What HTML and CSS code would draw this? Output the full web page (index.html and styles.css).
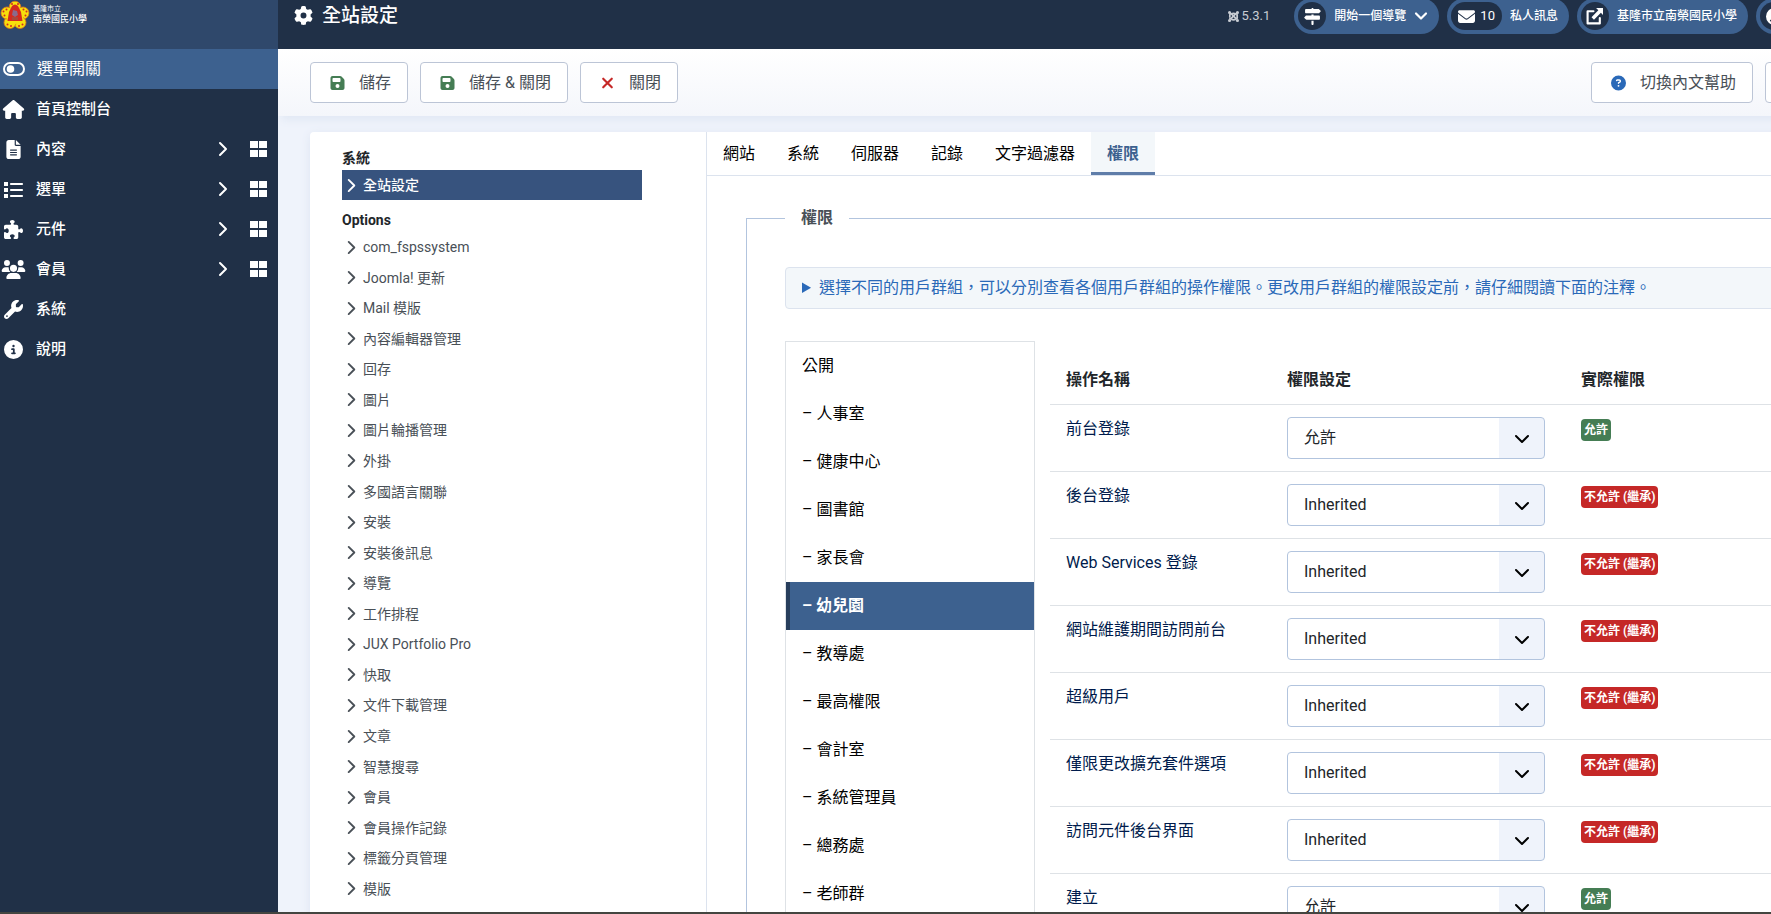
FILE: index.html
```html
<!DOCTYPE html>
<html lang="zh-TW">
<head>
<meta charset="utf-8">
<title>全站設定</title>
<link rel="stylesheet" href="styles.css">
</head>
<body>
<svg class="sprite" aria-hidden="true">
  <symbol id="chev-right" viewBox="0 0 10 16"><path d="M2 2l6 6-6 6" fill="none" stroke="currentColor" stroke-width="2" stroke-linecap="round" stroke-linejoin="round"/></symbol>
  <symbol id="grid" viewBox="0 0 18 18"><path d="M0 1h8v7H0zM9 1h8v7H9zM0 10h8v7H0zM9 10h8v7H9z"/></symbol>
  <symbol id="save" viewBox="0 0 448 512"><path d="M64 32C28.7 32 0 60.7 0 96V416c0 35.3 28.7 64 64 64H384c35.3 0 64-28.7 64-64V173.3c0-17-6.7-33.3-18.7-45.3L352 50.7C340 38.7 323.7 32 306.7 32H64zm0 96c0-17.7 14.3-32 32-32H288c17.7 0 32 14.3 32 32v64c0 17.7-14.3 32-32 32H96c-17.7 0-32-14.3-32-32V128zM224 288a64 64 0 1 1 0 128 64 64 0 1 1 0-128z"/></symbol>
</svg>

<div class="shell">
  <aside class="sidebar">
    <a class="logo" href="#">
      <svg class="emblem" viewBox="0 0 30 30" aria-hidden="true">
        <g fill="#f7e00c" stroke="#e0741a" stroke-width=".8">
          <circle cx="15" cy="7" r="5.800"/><circle cx="23" cy="13" r="6"/><circle cx="20" cy="22.500" r="6"/><circle cx="10" cy="22.500" r="6"/><circle cx="7" cy="13" r="6"/>
        </g>
        <circle cx="15" cy="15.500" r="8.500" fill="#f7e00c"/>
        <path d="M12 6q3-3 6 0l3 6 1.500 9H7.500L9 12z" fill="#d42a20"/>
        <path d="M13 10l4 1 1 4-3 2-3-2z" fill="#8a6a8c"/>
        <path d="M12 17h6v3h-6z" fill="#a8483c"/>
        <g fill="#d42a20"><circle cx="3.500" cy="11.500" r="1"/><circle cx="6.500" cy="9.500" r="1"/><circle cx="4.500" cy="15.500" r="1"/><circle cx="26.500" cy="11.500" r="1"/><circle cx="23.500" cy="9.500" r="1"/><circle cx="25.500" cy="15.500" r="1"/><circle cx="7.500" cy="24.500" r="1"/><circle cx="11" cy="26" r="1"/><circle cx="19" cy="26" r="1"/><circle cx="22.500" cy="24.500" r="1"/><circle cx="12" cy="4" r="1"/><circle cx="18" cy="4" r="1"/></g>
      </svg>
      <span class="logo-text"><span class="logo-small">基隆市立</span><span class="logo-name">南榮國民小學</span></span>
    </a>
    <button class="menu-toggle" type="button">
      <svg class="icon-toggle" viewBox="0 0 22 14" aria-hidden="true"><rect x="1" y="1" width="20" height="12" rx="6" fill="none" stroke="currentColor" stroke-width="2"/><circle cx="7.500" cy="7" r="3.800"/></svg>
      <span>選單開關</span>
    </button>
    <nav>
      <ul class="menu">
        <li><a href="#"><svg class="mi wide" viewBox="0 0 576 512"><path d="M575.8 255.5c0 18-15 32.1-32 32.1h-32l.7 160.2c0 2.700-.2 5.400-.5 8.100V472c0 22.100-17.900 40-40 40H392c-22.100 0-40-17.900-40-40V384c0-17.700-14.300-32-32-32H256c-17.700 0-32 14.300-32 32v88c0 22.100-17.900 40-40 40H104c-22.100 0-40-17.900-40-40V287.600H32c-18 0-32-14-32-32.100c0-9 3-17 10-24L266.400 8c7-7 15-8 22-8s15 2 21 7L564.800 231.500c8 7 12 15 11 24z"/></svg><span>首頁控制台</span></a></li>
        <li><a href="#"><svg class="mi" viewBox="0 0 384 512"><path d="M64 0C28.7 0 0 28.7 0 64V448c0 35.3 28.7 64 64 64H320c35.3 0 64-28.7 64-64V160H256c-17.7 0-32-14.3-32-32V0H64zM256 0V128H384L256 0zM112 256H272c8.8 0 16 7.2 16 16s-7.2 16-16 16H112c-8.8 0-16-7.2-16-16s7.2-16 16-16zm0 64H272c8.8 0 16 7.2 16 16s-7.2 16-16 16H112c-8.8 0-16-7.2-16-16s7.2-16 16-16zm0 64H272c8.8 0 16 7.2 16 16s-7.2 16-16 16H112c-8.8 0-16-7.2-16-16s7.2-16 16-16z"/></svg><span>內容</span><svg class="sub"><use href="#chev-right"/></svg></a><a class="dash" href="#" aria-label="內容"><svg><use href="#grid"/></svg></a></li>
        <li><a href="#"><svg class="mi" viewBox="0 0 19 19"><path d="M0 2h4v4H0zM0 8h4v4H0zM0 14h4v4H0z"/><path d="M7 4h11M7 10h11M7 16h11" stroke="currentColor" stroke-width="2.200" stroke-linecap="round"/></svg><span>選單</span><svg class="sub"><use href="#chev-right"/></svg></a><a class="dash" href="#" aria-label="選單"><svg><use href="#grid"/></svg></a></li>
        <li><a href="#"><svg class="mi" viewBox="0 0 512 512"><path d="M192 104.8c0-9.2-5.8-17.3-13.2-22.8C167.2 73.3 160 61.3 160 48c0-26.5 28.7-48 64-48s64 21.5 64 48c0 13.3-7.2 25.3-18.8 34c-7.4 5.5-13.2 13.6-13.2 22.8c0 12.8 10.4 23.2 23.2 23.2H336c26.5 0 48 21.5 48 48v56.8c0 12.8 10.4 23.2 23.2 23.2c9.2 0 17.3-5.8 22.8-13.2c8.7-11.6 20.7-18.8 34-18.8c26.5 0 48 28.7 48 64s-21.5 64-48 64c-13.3 0-25.3-7.2-34-18.8c-5.5-7.4-13.6-13.2-22.8-13.2c-12.8 0-23.2 10.4-23.2 23.2V464c0 26.5-21.5 48-48 48H279.2c-12.8 0-23.2-10.4-23.2-23.2c0-9.2 5.8-17.3 13.2-22.8c11.6-8.700 18.8-20.700 18.8-34c0-26.5-28.7-48-64-48s-64 21.5-64 48c0 13.3 7.2 25.3 18.8 34c7.4 5.5 13.2 13.6 13.2 22.8c0 12.8-10.4 23.2-23.2 23.2H48c-26.5 0-48-21.5-48-48V343.2C0 330.4 10.4 320 23.2 320c9.2 0 17.3 5.8 22.8 13.2C54.7 344.8 66.7 352 80 352c26.5 0 48-28.7 48-64s-21.5-64-48-64c-13.3 0-25.3 7.2-34 18.8C40.500 250.2 32.4 256 23.2 256C10.4 256 0 245.6 0 232.8V176c0-26.5 21.5-48 48-48H168.8c12.8 0 23.2-10.4 23.2-23.2z"/></svg><span>元件</span><svg class="sub"><use href="#chev-right"/></svg></a><a class="dash" href="#" aria-label="元件"><svg><use href="#grid"/></svg></a></li>
        <li><a href="#"><svg class="mi wide" viewBox="0 0 640 512"><path d="M144 0a80 80 0 1 1 0 160A80 80 0 1 1 144 0zM512 0a80 80 0 1 1 0 160A80 80 0 1 1 512 0zM0 298.7C0 239.8 47.8 192 106.7 192h42.7c15.9 0 31 3.5 44.6 9.7c-1.3 7.2-1.9 14.7-1.9 22.3c0 38.2 16.8 72.5 43.3 96H21.3C9.6 320 0 310.4 0 298.7zM404.6 320c26.6-23.5 43.3-57.8 43.3-96c0-7.6-.7-15-1.9-22.3c13.6-6.3 28.7-9.7 44.6-9.7h42.7C592.2 192 640 239.8 640 298.7c0 11.8-9.6 21.3-21.3 21.3zM224 224a96 96 0 1 1 192 0 96 96 0 1 1-192 0zM128 485.3C128 411.7 187.7 352 261.3 352H378.7C452.3 352 512 411.7 512 485.3c0 14.7-11.9 26.7-26.7 26.7H154.7c-14.7 0-26.7-11.9-26.7-26.7z"/></svg><span>會員</span><svg class="sub"><use href="#chev-right"/></svg></a><a class="dash" href="#" aria-label="會員"><svg><use href="#grid"/></svg></a></li>
        <li><a href="#"><svg class="mi" viewBox="0 0 512 512"><path d="M352 320c88.4 0 160-71.6 160-160c0-15.3-2.2-30.1-6.2-44.2c-3.1-10.8-16.4-13.2-24.3-5.3l-76.8 76.8c-3 3-7.1 4.7-11.3 4.7H336c-8.8 0-16-7.2-16-16V118.6c0-4.2 1.7-8.3 4.7-11.3l76.8-76.8c7.9-7.9 5.4-21.2-5.3-24.3C382.1 2.2 367.3 0 352 0C263.6 0 192 71.6 192 160c0 19.1 3.4 37.5 9.5 54.5L19.9 396.1C7.2 408.8 0 426.1 0 444.1C0 481.6 30.4 512 67.9 512c18 0 35.3-7.2 48-19.9L297.5 310.5c17 6.2 35.4 9.5 54.5 9.5zM80 408a24 24 0 1 1 0 48 24 24 0 1 1 0-48z"/></svg><span>系統</span></a></li>
        <li><a href="#"><svg class="mi" viewBox="0 0 512 512"><path d="M256 512A256 256 0 1 0 256 0a256 256 0 1 0 0 512zM216 336h24V272H216c-13.3 0-24-10.7-24-24s10.7-24 24-24h48c13.3 0 24 10.7 24 24v88h8c13.3 0 24 10.7 24 24s-10.7 24-24 24H216c-13.3 0-24-10.7-24-24s10.7-24 24-24zm40-208a32 32 0 1 1 0 64 32 32 0 1 1 0-64z"/></svg><span>說明</span></a></li>
      </ul>
    </nav>
  </aside>

  <div class="page">
    <header class="header">
      <h1 class="title"><svg viewBox="0 0 512 512" aria-hidden="true"><path d="M495.9 166.6c3.2 8.7 .5 18.4-6.4 24.6l-43.3 39.4c1.1 8.3 1.7 16.8 1.7 25.4s-.6 17.1-1.7 25.4l43.3 39.4c6.9 6.2 9.6 15.9 6.4 24.6c-4.4 11.9-9.7 23.3-15.8 34.3l-4.7 8.1c-6.6 11-14 21.4-22.1 31.2c-5.9 7.2-15.7 9.6-24.5 6.8l-55.7-17.7c-13.4 10.3-28.2 18.9-44 25.4l-12.5 57.1c-2 9.1-9 16.3-18.2 17.8c-13.8 2.3-28 3.5-42.5 3.5s-28.7-1.2-42.5-3.5c-9.2-1.5-16.2-8.7-18.2-17.8l-12.5-57.1c-15.8-6.5-30.6-15.1-44-25.4L83.1 425.9c-8.8 2.8-18.6 .3-24.5-6.8c-8.1-9.8-15.5-20.2-22.1-31.2l-4.7-8.1c-6.1-11-11.4-22.4-15.8-34.3c-3.2-8.7-.5-18.4 6.4-24.6l43.3-39.4C64.6 273.1 64 264.6 64 256s.6-17.1 1.7-25.4L22.4 191.2c-6.9-6.2-9.6-15.9-6.4-24.6c4.4-11.9 9.7-23.3 15.8-34.3l4.7-8.1c6.6-11 14-21.4 22.1-31.2c5.9-7.2 15.7-9.6 24.5-6.8l55.7 17.7c13.4-10.3 28.2-18.9 44-25.4l12.5-57.1c2-9.1 9-16.3 18.2-17.8C227.3 1.2 241.5 0 256 0s28.7 1.2 42.5 3.5c9.2 1.5 16.2 8.7 18.2 17.8l12.5 57.1c15.8 6.5 30.6 15.1 44 25.4l55.7-17.7c8.8-2.8 18.6-.3 24.5 6.8c8.1 9.8 15.5 20.2 22.1 31.2l4.7 8.1c6.1 11 11.4 22.4 15.8 34.3zM256 336a80 80 0 1 0 0-160 80 80 0 1 0 0 160z"/></svg>全站設定</h1>
      <div class="header-items">
        <span class="version"><svg viewBox="0 0 12 12" aria-hidden="true"><g fill="none" stroke="currentColor" stroke-width="1.900"><path d="M2 7V4.500Q2 2 4 3.500L8.500 8Q10 9.500 10 7"/><path d="M10 5Q10 2 8 3.500L3.500 8Q2 9.500 2 7"/><path d="M10 4v4M3.500 3.500Q6 1.500 8.500 3.500M3.500 8.800Q6 10.500 8.500 8.800"/></g><circle cx="1.700" cy="1.700" r="1.700"/><circle cx="10.300" cy="1.700" r="1.700"/><circle cx="1.700" cy="10.300" r="1.700"/><circle cx="10.300" cy="10.300" r="1.700"/></svg>5.3.1</span>
        <button class="pill" type="button"><span class="pill-icon"><svg viewBox="0 0 512 512" aria-hidden="true"><path d="M224 32H64C46.3 32 32 46.3 32 64v64c0 17.7 14.3 32 32 32H441.4c4.2 0 8.3-1.7 11.3-4.7l48-48c6.2-6.2 6.2-16.4 0-22.6l-48-48c-3-3-7.1-4.7-11.3-4.7H288c0-17.7-14.3-32-32-32s-32 14.3-32 32zM480 256c0-17.7-14.3-32-32-32H288V192H224v32H70.6c-4.2 0-8.3 1.7-11.3 4.7l-48 48c-6.2 6.2-6.2 16.4 0 22.6l48 48c3 3 7.1 4.7 11.3 4.7H448c17.7 0 32-14.3 32-32V256zM288 480V384H224v96c0 17.7 14.3 32 32 32s32-14.3 32-32z"/></svg></span><span>開始一個導覽</span><svg class="caret" viewBox="0 0 14 14" aria-hidden="true"><path d="M2 4.500l5 5 5-5" fill="none" stroke="currentColor" stroke-width="2.200" stroke-linecap="round" stroke-linejoin="round"/></svg></button>
        <a class="pill" href="#"><span class="pill-icon pill-count"><svg viewBox="0 0 512 512" aria-hidden="true"><path d="M48 64C21.500 64 0 85.500 0 112c0 15.100 7.100 29.300 19.200 38.400L236.800 313.600c11.400 8.500 27 8.500 38.400 0L492.800 150.400c12.100-9.100 19.200-23.300 19.200-38.400c0-26.500-21.500-48-48-48H48zM0 176V384c0 35.300 28.700 64 64 64H448c35.300 0 64-28.700 64-64V176L294.400 339.200c-22.800 17.100-54 17.100-76.800 0L0 176z"/></svg>10</span><span>私人訊息</span></a>
        <a class="pill" href="#"><span class="pill-icon"><svg viewBox="0 0 16 16" aria-hidden="true"><path d="M7 3H1.500v11.500H13V9.500" fill="none" stroke="currentColor" stroke-width="2" stroke-linejoin="round" stroke-linecap="round"/><path d="M9.500 0H16v6.500l-2-2L7.500 11 5.200 8.700 11.600 2z"/></svg></span><span>基隆市立南榮國民小學</span></a>
        <button class="pill pill-user" type="button" aria-label="會員選單"><span class="pill-icon"><svg viewBox="0 0 512 512" aria-hidden="true"><path d="M399 384.2C376.900 345.800 335.400 320 288 320H224c-47.400 0-88.900 25.800-111 64.200c35.200 39.200 86.200 63.800 143 63.800s107.800-24.700 143-63.800zM0 256a256 256 0 1 1 512 0A256 256 0 1 1 0 256zm256 16a72 72 0 1 0 0-144 72 72 0 1 0 0 144z"/></svg></span></button>
      </div>
    </header>

    <div class="toolbar">
      <button class="btn" type="button"><svg class="ok"><use href="#save"/></svg>儲存</button>
      <button class="btn" type="button"><svg class="ok"><use href="#save"/></svg>儲存 &amp; 關閉</button>
      <button class="btn" type="button"><svg class="bad" viewBox="0 0 14 14"><path d="M3 3l8 8M11 3l-8 8" stroke="currentColor" stroke-width="2" stroke-linecap="round"/></svg>關閉</button>
      <button class="btn btn-help" type="button"><svg class="info" viewBox="0 0 512 512"><path d="M256 512A256 256 0 1 0 256 0a256 256 0 1 0 0 512zM169.800 165.300c7.900-22.300 29.100-37.300 52.800-37.300h58.300c34.900 0 63.100 28.300 63.100 63.100c0 22.600-12.100 43.500-31.700 54.800L280 264.400c-.2 13-10.900 23.600-24 23.600c-13.300 0-24-10.700-24-24V250.500c0-8.600 4.600-16.500 12.100-20.800l44.300-25.400c4.700-2.700 7.600-7.700 7.600-13.100c0-8.400-6.800-15.100-15.100-15.100H222.600c-3.400 0-6.400 2.100-7.500 5.300l-.4 1.200c-4.400 12.500-18.200 19-30.600 14.600s-19-18.200-14.600-30.600l.3-1.200zM224 352a32 32 0 1 1 64 0 32 32 0 1 1-64 0z"/></svg>切換內文幫助</button>
      <button class="btn btn-more" type="button" aria-label="選項"></button>
    </div>

    <main class="card">
      <nav class="config-nav">
        <h2>系統</h2>
        <a class="config-link current" href="#"><svg><use href="#chev-right"/></svg>全站設定</a>
        <h2 class="options-title">Options</h2>
        <ul class="config-list">
          <li><a class="config-link" href="#"><svg><use href="#chev-right"/></svg>com_fspssystem</a></li>
          <li><a class="config-link" href="#"><svg><use href="#chev-right"/></svg>Joomla! 更新</a></li>
          <li><a class="config-link" href="#"><svg><use href="#chev-right"/></svg>Mail 模版</a></li>
          <li><a class="config-link" href="#"><svg><use href="#chev-right"/></svg>內容編輯器管理</a></li>
          <li><a class="config-link" href="#"><svg><use href="#chev-right"/></svg>回存</a></li>
          <li><a class="config-link" href="#"><svg><use href="#chev-right"/></svg>圖片</a></li>
          <li><a class="config-link" href="#"><svg><use href="#chev-right"/></svg>圖片輪播管理</a></li>
          <li><a class="config-link" href="#"><svg><use href="#chev-right"/></svg>外掛</a></li>
          <li><a class="config-link" href="#"><svg><use href="#chev-right"/></svg>多國語言關聯</a></li>
          <li><a class="config-link" href="#"><svg><use href="#chev-right"/></svg>安裝</a></li>
          <li><a class="config-link" href="#"><svg><use href="#chev-right"/></svg>安裝後訊息</a></li>
          <li><a class="config-link" href="#"><svg><use href="#chev-right"/></svg>導覽</a></li>
          <li><a class="config-link" href="#"><svg><use href="#chev-right"/></svg>工作排程</a></li>
          <li><a class="config-link" href="#"><svg><use href="#chev-right"/></svg>JUX Portfolio Pro</a></li>
          <li><a class="config-link" href="#"><svg><use href="#chev-right"/></svg>快取</a></li>
          <li><a class="config-link" href="#"><svg><use href="#chev-right"/></svg>文件下載管理</a></li>
          <li><a class="config-link" href="#"><svg><use href="#chev-right"/></svg>文章</a></li>
          <li><a class="config-link" href="#"><svg><use href="#chev-right"/></svg>智慧搜尋</a></li>
          <li><a class="config-link" href="#"><svg><use href="#chev-right"/></svg>會員</a></li>
          <li><a class="config-link" href="#"><svg><use href="#chev-right"/></svg>會員操作記錄</a></li>
          <li><a class="config-link" href="#"><svg><use href="#chev-right"/></svg>標籤分頁管理</a></li>
          <li><a class="config-link" href="#"><svg><use href="#chev-right"/></svg>模版</a></li>
        </ul>
      </nav>

      <div class="config-body">
        <div class="tabs" role="tablist">
          <button type="button" role="tab">網站</button>
          <button type="button" role="tab">系統</button>
          <button type="button" role="tab">伺服器</button>
          <button type="button" role="tab">記錄</button>
          <button type="button" role="tab">文字過濾器</button>
          <button type="button" role="tab" class="active" aria-selected="true">權限</button>
        </div>
        <fieldset class="permissions">
          <legend>權限</legend>
          <details class="notice">
            <summary>選擇不同的用戶群組，可以分別查看各個用戶群組的操作權限。更改用戶群組的權限設定前，請仔細閱讀下面的注釋。</summary>
          </details>
          <div class="panes">
            <div class="groups" role="tablist">
              <button type="button" role="tab">公開</button>
              <button type="button" role="tab">– 人事室</button>
              <button type="button" role="tab">– 健康中心</button>
              <button type="button" role="tab">– 圖書館</button>
              <button type="button" role="tab">– 家長會</button>
              <button type="button" role="tab" class="active" aria-selected="true">– 幼兒園</button>
              <button type="button" role="tab">– 教導處</button>
              <button type="button" role="tab">– 最高權限</button>
              <button type="button" role="tab">– 會計室</button>
              <button type="button" role="tab">– 系統管理員</button>
              <button type="button" role="tab">– 總務處</button>
              <button type="button" role="tab">– 老師群</button>
            </div>
            <table class="rules">
              <thead><tr><th class="col-action">操作名稱</th><th class="col-setting">權限設定</th><th>實際權限</th></tr></thead>
              <tbody>
                <tr><td><label for="r1">前台登錄</label></td><td><select id="r1"><option>允許</option></select></td><td><span class="badge yes">允許</span></td></tr>
                <tr><td><label for="r2">後台登錄</label></td><td><select id="r2"><option>Inherited</option></select></td><td><span class="badge no">不允許 (繼承)</span></td></tr>
                <tr><td><label for="r3">Web Services 登錄</label></td><td><select id="r3"><option>Inherited</option></select></td><td><span class="badge no">不允許 (繼承)</span></td></tr>
                <tr><td><label for="r4">網站維護期間訪問前台</label></td><td><select id="r4"><option>Inherited</option></select></td><td><span class="badge no">不允許 (繼承)</span></td></tr>
                <tr><td><label for="r5">超級用戶</label></td><td><select id="r5"><option>Inherited</option></select></td><td><span class="badge no">不允許 (繼承)</span></td></tr>
                <tr><td><label for="r6">僅限更改擴充套件選項</label></td><td><select id="r6"><option>Inherited</option></select></td><td><span class="badge no">不允許 (繼承)</span></td></tr>
                <tr><td><label for="r7">訪問元件後台界面</label></td><td><select id="r7"><option>Inherited</option></select></td><td><span class="badge no">不允許 (繼承)</span></td></tr>
                <tr><td><label for="r8">建立</label></td><td><select id="r8"><option>允許</option></select></td><td><span class="badge yes">允許</span></td></tr>
              </tbody>
            </table>
          </div>
        </fieldset>
      </div>
    </main>
  </div>
</div>
</body>
</html>
```

FILE: styles.css
```css
* { box-sizing: border-box; }

:root {
  --dark: #203047;
  --blue: #3d618f;
  --page: #eff3fb;
  --line: #dce3ee;
  --control: #b2c4de;
}

body {
  margin: 0;
  height: 100vh;
  overflow: hidden;
  border-bottom: 2px solid #444540;
  background: var(--page);
  color: #22262a;
  font-family: Roboto, "Noto Sans CJK TC", sans-serif;
  font-size: 16px;
  line-height: 24px;
}

button, select { font: inherit; color: inherit; }
button { margin: 0; padding: 0; border: 0; background: none; text-align: left; }
a { color: inherit; text-decoration: none; }
ul { margin: 0; padding: 0; list-style: none; }
svg { fill: currentColor; flex: none; }
.sprite { position: absolute; width: 0; height: 0; }

/* The admin shell runs past the right edge of the window. */
.shell { display: flex; width: calc(100% + 120px); min-height: 100%; }

/* Sidebar */
.sidebar { position: relative; z-index: 1; flex: none; width: 278px; background: var(--dark); color: #fff; }
.logo { display: flex; align-items: flex-start; gap: 3px; height: 49px; background: #2f486b; }
.emblem { width: 30px; height: 30px; }
.logo-text { display: flex; flex-direction: column; padding-top: 4px; }
.logo-small { font-size: 7px; line-height: 10px; }
.logo-name { font-size: 9px; font-weight: 500; line-height: 10px; }
.menu-toggle { display: flex; align-items: center; gap: 12px; width: 100%; height: 40px; padding-left: 3px; background: var(--blue); }
.icon-toggle { width: 22px; height: 14px; }
.menu { font-size: 15px; font-weight: 500; }
.menu li { display: flex; height: 40px; }
.menu a { display: flex; align-items: center; flex: 1; }
.mi { width: 27px; height: 19px; margin-right: 9px; }
.menu .sub { width: 10px; height: 16px; margin-left: auto; }
.menu .dash { flex: none; width: 50px; padding-left: 22px; }
.dash svg { width: 18px; height: 18px; }

/* Header */
.page { flex: 1; min-width: 0; }
.header { display: flex; align-items: flex-start; justify-content: space-between; height: 49px; padding: 0 11px 0 16px; background: var(--dark); color: #fff; }
.title { display: flex; align-items: center; gap: 9px; margin: 0; font-size: 19px; font-weight: 500; line-height: 31px; }
.title svg { width: 19px; height: 19px; }
.header-items { display: flex; align-items: center; gap: 8px; margin-top: -2px; font-size: 12px; }
.version { display: flex; align-items: center; gap: 3px; margin-right: 16px; color: #c8ccd3; font-size: 13px; }
.version svg { width: 11px; height: 11px; }
.pill { display: flex; align-items: center; gap: 8px; height: 36px; padding: 0 11px 0 4px; border-radius: 18px; background: var(--blue); font-weight: 500; }
.pill-icon { display: flex; align-items: center; justify-content: center; gap: 5px; min-width: 28px; height: 28px; border-radius: 14px; background: var(--dark); }
.pill-icon svg { width: 17px; height: 17px; }
.pill-count { padding: 0 7px; font-size: 13px; font-weight: 400; }
.caret { width: 14px; height: 14px; }
.pill-user { width: 124px; }

/* Toolbar */
.toolbar { display: flex; gap: 12px; padding: 13px 28px 13px 32px; background: linear-gradient(#fff, #f4f6fb); box-shadow: 0 8px 8px -4px #e1e8f4; }
.btn { display: flex; align-items: center; gap: 14px; height: 41px; padding: 0 16px 0 19px; border: 1px solid #bcc5d6; border-radius: 4px; background: #fff; color: #495057; }
.btn svg { width: 15px; height: 16px; }
.btn .ok { color: #457d54; }
.btn .bad { color: #c52827; }
.btn .info { color: #2a69b8; }
.btn-help { margin-left: auto; }
.btn-more { width: 98px; }

/* Card */
.card { display: flex; margin: 16px 0 0 32px; border-radius: 4px 0 0 0; background: #fff; box-shadow: 0 2px 10px #dde5f2; }
.config-nav { flex: none; width: 396px; padding: 14px 64px 24px 32px; font-size: 14px; }
.config-nav h2 { margin: 0; font-size: 14px; font-weight: 700; line-height: 24px; }
.config-nav .options-title { margin: 8px 0 0; }
.config-link { display: flex; align-items: center; gap: 6px; height: 30px; padding-left: 4px; color: #495057; }
.config-link svg { width: 11px; height: 15px; }
.current { background: #37537e; color: #fff; font-weight: 500; }
.config-list { display: flex; flex-direction: column; justify-content: space-between; min-height: 672px; }

.config-body { flex: 1; min-width: 0; border-left: 1px solid var(--line); }
.tabs { display: flex; border-bottom: 1px solid var(--line); }
.tabs button { height: 43px; padding: 0 16px; color: #000; }
.tabs .active { padding-top: 3px; border-bottom: 3px solid #5f7da9; background: #f3f7fa; color: #3d618f; font-weight: 700; }

.permissions { min-width: 0; margin: 30px 39px 0; padding: 37px 38px 0; border: 1px solid var(--control); }
.permissions legend { padding: 0 16px; color: #495057; font-weight: 700; }
.notice { padding: 8px 16px; border: 1px solid var(--line); border-radius: 4px; background: #f3f7fa; color: #2a69b8; }
.panes { display: flex; align-items: flex-start; gap: 15px; margin-top: 32px; }
.groups { flex: none; display: flex; flex-direction: column; width: 250px; border: 1px solid #dee2e6; }
.groups button { height: 48px; padding: 0 16px; color: #000; }
.groups .active { padding-left: 12px; border-left: 4px solid #273e5c; background: var(--blue); color: #fff; font-weight: 700; }

.rules { flex: 1; margin-top: 15px; border-collapse: collapse; }
.rules th, .rules td { padding: 12px 16px; border-bottom: 1px solid #dee2e6; text-align: left; vertical-align: top; }
.rules th { font-weight: 700; }
.rules td { height: 67px; color: #001b4c; }
.col-action { width: 221px; }
.col-setting { width: 294px; }
.rules select {
  display: block;
  width: 258px;
  height: 42px;
  padding: 0 60px 0 16px;
  border: 1px solid var(--control);
  border-radius: 4px;
  appearance: none;
  color: #22262a;
  background:
    url("data:image/svg+xml,%3Csvg xmlns='http://www.w3.org/2000/svg' viewBox='0 0 16 16'%3E%3Cpath d='M2 5l6 6 6-6' fill='none' stroke='%23000' stroke-width='2' stroke-linecap='round' stroke-linejoin='round'/%3E%3C/svg%3E") right 14px top 13px / 16px 16px no-repeat,
    linear-gradient(#eff3fb, #eff3fb) right / 45px 100% no-repeat,
    #fff;
}
.badge { display: inline-block; margin-top: 2px; padding: 0 3px; border-radius: 4px; color: #fff; font-size: 12px; font-weight: 700; line-height: 22px; vertical-align: top; }
.yes { background: #457d54; }
.no { background: #c52827; }
```
